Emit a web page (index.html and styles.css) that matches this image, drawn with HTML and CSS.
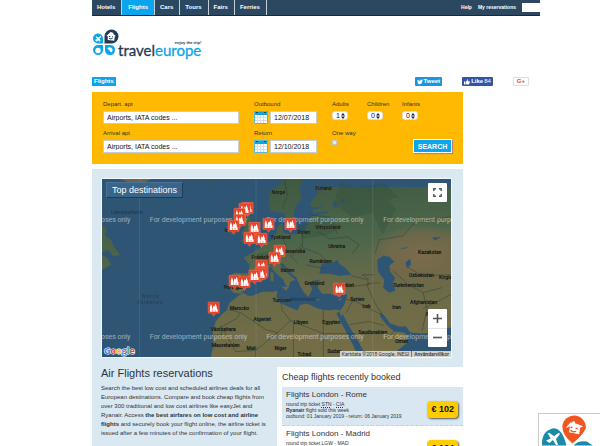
FILE: index.html
```html
<!DOCTYPE html>
<html lang="en">
<head>
<meta charset="utf-8">
<title>Travel Europe - Flights</title>
<link rel="stylesheet" href="styles.css">
</head>
<body>
<nav class="topbar">
  <a href="#">Hotels</a>
  <a href="#" class="active">Flights</a>
  <a href="#">Cars</a>
  <a href="#">Tours</a>
  <a href="#">Fairs</a>
  <a href="#">Ferries</a>
  <div class="tools">
    <a href="#">Help</a>
    <a href="#">My reservations</a>
    <input type="search" aria-label="Search site">
  </div>
</nav>

<header class="brand">
  <svg class="petals" viewBox="0 0 28 28" aria-hidden="true">
    <path d="M1 9.500a5 5 0 0 1 10 0V14.500H6a5 5 0 0 1-5-5z" fill="#0ba5e6"/>
    <path d="M3 11l2-1.200-1.500-2 .8-.4 2.400 1 1.700-1.500.8.200-.2.900-1.500 1.600 1 2.500-.5.700-1.900-1.600L4.800 12.800z" fill="#fff"/>
    <path d="M12.500 14.500V7.500a7 7 0 1 1 7 7z" fill="#1f3a54"/>
    <path d="M14.300 7l4.500-4.200 1.400 1 1-.3.100 1.600 2.500 1.800-1 .6-.6 4.200-6.500-.6.100-3.800z" fill="#fff"/>
    <path d="M17 7.500h1.200M20 7.800h1M17 9.200q1.600 1.300 3.500.2" stroke="#1f3a54" fill="none"/>
    <path d="M11 16v5.500a5 5 0 1 1-5-5.500z" fill="#0ba5e6"/>
    <circle cx="6" cy="21.500" r="2.700" fill="#fff"/>
    <path d="M13 16h5.500a5 5 0 1 1-5.500 5.500z" fill="#0ba5e6"/>
    <path d="M15.300 19.500q3-2.800 5 .5 1 2.300-1.400 3.400-1-2-3.600-3.900z" fill="#fff"/>
  </svg>
  <div class="wordmark">
    <span class="slogan">enjoy the trip!</span>
    <span class="name">travel<b>europe</b></span>
  </div>
</header>

<div class="crumbs">
  <a href="#" class="tag">Flights</a>
  <div class="social">
    <button class="tweet"><svg viewBox="0 0 12 10"><path d="M0 8.500q2.200.1 3.400-1Q1.700 7.200 1.400 5.800h.9Q.7 5 .7 3.300l1 .3Q.3 2.300 1.200.5q2 2.300 4.900 2.400Q6 .2 8.500 0q1 0 1.700.8L11.700.2l-1 1.300L12 1.200l-1.200 1.300Q10.500 9.500 4 9.700 1.700 9.700 0 8.500z" fill="#fff"/></svg>Tweet</button>
    <button class="like"><svg viewBox="0 0 12 12"><path d="M0 5h3v6H0zM4 5l2.500-2.500V.5Q8.500.3 8.200 3L7.800 4.500H11q1.300 1 .3 2.200.4 1-.5 1.700 0 1-.8 1.500-.3 1.100-1.200 1.100H6L4 10z" fill="#fff"/></svg>Like <span>84</span></button>
    <button class="gplus">G+</button>
  </div>
</div>

<main>
  <form class="booking">
    <div class="field from"><label for="dep">Depart. apt</label><input id="dep" type="text" value="Airports, IATA codes ..."></div>
    <div class="field out"><label for="outd">Outbound</label>
      <div class="date"><svg viewBox="0 0 14 13"><path d="M0 0h14v13H0z" fill="#fff"/><path d="M0 0h14v4H0z" fill="#12a2dc"/><path d="M3 0v2M11 0v2" stroke="#1d4660" stroke-width="2"/><path d="M1 6.500h12M1 9.500h12M3.500 4v9M6.500 4v9M9.500 4v9" stroke="#d5dde2"/><path d="M.5.500h13v12H.5z" stroke="#55b8dd" fill="none"/></svg><input id="outd" type="text" value="12/07/2018"></div></div>
    <div class="field"><label for="ad">Adults</label><select id="ad"><option>1</option></select></div>
    <div class="field"><label for="ch">Children</label><select id="ch"><option>0</option></select></div>
    <div class="field"><label for="inf">Infants</label><select id="inf"><option>0</option></select></div>
    <div class="field from"><label for="arr">Arrival apt</label><input id="arr" type="text" value="Airports, IATA codes ..."></div>
    <div class="field"><label for="ret">Return</label>
      <div class="date"><svg viewBox="0 0 14 13"><path d="M0 0h14v13H0z" fill="#fff"/><path d="M0 0h14v4H0z" fill="#12a2dc"/><path d="M3 0v2M11 0v2" stroke="#1d4660" stroke-width="2"/><path d="M1 6.500h12M1 9.500h12M3.500 4v9M6.500 4v9M9.500 4v9" stroke="#d5dde2"/><path d="M.5.500h13v12H.5z" stroke="#55b8dd" fill="none"/></svg><input id="ret" type="text" value="12/10/2018"></div></div>
    <div class="field"><label for="ow">One way</label><input id="ow" type="checkbox"></div>
    <button class="search" type="button">SEARCH</button>
  </form>

  <section class="panel">
    <div class="map">
      <svg class="world" viewBox="101 179 350 179" preserveAspectRatio="xMidYMid slice">
        <defs>
          <linearGradient id="land" gradientUnits="userSpaceOnUse" x1="300" y1="179" x2="318" y2="358">
            <stop offset="0" stop-color="#3f5a42"/><stop offset=".35" stop-color="#4c664b"/><stop offset=".6" stop-color="#696a49"/><stop offset="1" stop-color="#756e46"/>
          </linearGradient>
          <radialGradient id="steppe"><stop offset="0" stop-color="#7c6c4a"/><stop offset=".7" stop-color="#73684a" stop-opacity=".8"/><stop offset="1" stop-color="#73684a" stop-opacity="0"/></radialGradient>
          <g id="pin">
            <path d="M-5.500-6.500h11v11h-3.500L0 7.500-2 4.500h-3.500z" fill="#e8402a" stroke="#f4704f" stroke-width=".6"/>
            <path d="M-3.800 3.200V-1.500l1.100-3.300 1.100 3.300V0h.8v-1.500L.2-3.500l.8 1.500V-2.500L2-5 3.200-1.500v1.800h.8v2.900z" fill="#fff"/>
            <path d="M-1.200 3.200V.8M1.500 3.200V1" stroke="#e8402a" stroke-width=".5"/>
          </g>
        </defs>
        <path d="M101 179h350v179H101z" fill="#2f5575"/>
        <g fill="url(#land)">
          <path d="M210 358l3-13-1-12 3-11 6-7 5-4 3-8 9-7 5-3 4 3 5 0 10-4 10 0 5-1-1 6 3 6 9 4 9 4 3-6 7-1 11 5 10 2 8-1 4 1 4-6 2-6 1-5-9 3-8-3-8 0-4-5-1-6 3-3-8 1-4 2 4 6-4 8-5-5-4-7-3-7-8-7-5-7-4-1 3 6 8 7 5 4-5 2-2 6-3-3-2-5-8-7-5-6-6 2-7 2-1 5-6 4-3 7-7 7-7-1-3-3 1-14 2-3 15 1 1-9-6-7 9-5 6-4 8-6 6-3 4-7 1-6 4-4 2 10 9 2 12-2 4-10 4-7 10-2 6-1-2-2-13 2-3-10 7-10 3-6h134v179z"/>
          <path d="M268 203l2-13 10-6 5-5h18l-4 10 2 10-6 7-2 11-5 6-4-10-7-1-7-1z"/>
          <path d="M239 242l4-3-2-7 4-4-4-6-1-7 5-5 4 5 1 9 6 7 2 7-6 3-7 1z"/>
          <path d="M230 234l1-9 5-3 2 5-2 6z"/>
          <path d="M101 225l5 4-2 7 6 4 3 7 6 8-6 2-6-7-6 3z"/>
          <path d="M101 255l6 4 3 6-9 5zM203 179l8 0-3 2zM281 287l7 0-2 4zM270 272l3 1 0 9-3-1zM313 299l8 1-5 1zM337 300l5-2-2 3z"/>
        </g>
        <path d="M119 179h32l-9 4-7 1-8-2z" fill="#68654a"/>
        <ellipse cx="423" cy="256" rx="56" ry="32" fill="url(#steppe)"/>
        <g fill="#2f5575">
          <path d="M319 274l2-9 4-5 7 3 5-3 2 4 7 5 5 6-12 1-10-2z"/>
          <path d="M377 260l6-4 6 1 5 5-5 4 1 6 5 6-2 5 2 8-6 2-6-5 1-8-6-8z"/>
          <path d="M405 263l5-4 1 6-4 3z"/>
          <path d="M339 312l2 5 1-3 7 13 8 13 6 11 3 7h-8l-5-12-9-17-8-15z"/>
          <path d="M380 313l5 4 5 7 9 3 7 0 4 6 11 1 16-1 8-4 6-1v30h-70l15-6 10-8 2-8-5-3-9-1-7-6-7-9z"/>
          <path d="M294 211l12-3 13-1 7-2-9 4-8 1-3 8-5 3-4 7-6 4-8-1 3-6 7-5z"/>
          <path d="M318 188l3-3 2 4-3 2zM332 202l4 0 2 5-4 1zM340 199l4 0 1 4-3 0zM367 187l4 5-3-1zM361 179l1 6-3-4zM399 249l9-2-3 2zM432 238l9-1-6 4z"/>
        </g>
        <g fill="#334f3c" opacity=".35">
          <path d="M340 182l16 5 28-4 14 14-10 3 8 9-14 26-9-22-22 4-17-14z"/>
          <path d="M297 226l26-7 20 8-15 8-26 4zM256 254l16-3 7 4-11 8-10-1z"/>
        </g>
        <g fill="none" stroke="#303b2d" stroke-width=".6" opacity=".75">
          <path d="M228 310l12 3-4 6-15 8v8l-9 1M240 313l25 17 12 3 13-12-8-10-2-10M277 333l-22 18-20 1-9-16-6-10M290 321l33 13v-25M323 334h33M293 323v35M323 334v24M255 351v7M346 300l7 0 10 6 20 10M353 300l-7 13M383 316l-8-12-9-20 14-1M351 276l16 4 2 5-22 2M349 325l20-3 15 4M386 339l9-8M393 287l14-3 16 9 19-5M407 284l-14-13M423 293l4 16-5 22M423 309l28-14M375 253l4-13 24-4 12-14 22-3 14-2M233 275l5 2-2 13M249 273l12 4M253 253l15 9 4 5M272 248l10 5 12-1 8-8M281 237l5 10M302 234l0 14-12 8 8 8M318 232l11 7 18-2 12 8-7 9M302 248l17 6 7 7M305 265l20 4M309 215l20 2 8 17M284 180l3 15-5 14M369 280l-7-5 12 0M407 267l15 9 29-1"/>
        </g>
        <g class="places">
          <text x="271" y="194">Norge</text><text x="315" y="190">Finland</text><text x="315" y="229">Vitryssland</text><text x="297" y="234">Polen</text>
          <text x="270" y="239">Tyskland</text><text x="328" y="248">Ukraina</text><text x="251" y="259">Frankrike</text><text x="282" y="253">Slovenska</text><text x="309" y="263">Rumänien</text>
          <text x="280" y="272">Italien</text><text x="304" y="285">Grekland</text><text x="338" y="287">Turkiet</text><text x="350" y="301">Syrien</text><text x="362" y="308">Irak</text>
          <text x="392" y="309">Iran</text><text x="418" y="254">Kazakstan</text><text x="409" y="277">Uzbekistan</text><text x="439" y="279">Kirgizistan</text><text x="393" y="287">Turkmenistan</text>
          <text x="410" y="304">Afghanistan</text><text x="223" y="289">Portugal</text><text x="229" y="310">Marocko</text><text x="253" y="321">Algeriet</text><text x="272" y="302">Tunisien</text>
          <text x="293" y="324">Libyen</text><text x="322" y="324">Egypten</text><text x="358" y="334">Saudiarabien</text><text x="395" y="343">Oman</text><text x="210" y="331">Västsahara</text>
          <text x="211" y="347">Mauretanien</text><text x="246" y="350">Mali</text><text x="274" y="351">Niger</text><text x="297" y="357">Tchad</text><text x="327" y="354">Sudan</text><text x="224" y="232">Irland</text><text x="426" y="316">Pakistan</text>
          <text class="water" x="290" y="301">Medelhavet</text><text class="water" x="110" y="214">Labradorhavet</text>
          <text class="water ocean" x="141" y="298">Norra</text><text class="water ocean" x="136" y="304">Atlanten</text>
        </g>
        <path d="M138.500 179v179M255.500 179v179M372.500 179v179" stroke="#fff" opacity=".08"/>
        <g class="watermark">
          <text x="32" y="222">For development purposes only</text><text x="149" y="222">For development purposes only</text><text x="266" y="222">For development purposes only</text><text x="383" y="222">For development purposes only</text>
          <text x="32" y="339">For development purposes only</text><text x="149" y="339">For development purposes only</text><text x="266" y="339">For development purposes only</text><text x="383" y="339">For development purposes only</text>
        </g>
        <use href="#pin" x="247" y="209"/><use href="#pin" x="244" y="210"/><use href="#pin" x="239" y="215"/><use href="#pin" x="239" y="221"/><use href="#pin" x="233" y="227"/>
        <use href="#pin" x="254" y="229"/><use href="#pin" x="268" y="225"/><use href="#pin" x="290" y="225"/><use href="#pin" x="249" y="239"/><use href="#pin" x="261" y="240"/>
        <use href="#pin" x="279" y="252"/><use href="#pin" x="274" y="259"/><use href="#pin" x="261" y="267"/><use href="#pin" x="262" y="273"/><use href="#pin" x="260" y="275"/><use href="#pin" x="254" y="277"/>
        <use href="#pin" x="234" y="282"/><use href="#pin" x="244" y="283"/><use href="#pin" x="213" y="309"/><use href="#pin" x="339" y="290"/>
        <text class="google" x="103" y="355"><tspan fill="#4285f4">G</tspan><tspan fill="#ea4335">o</tspan><tspan fill="#fbbc05">o</tspan><tspan fill="#4285f4">g</tspan><tspan fill="#34a853">l</tspan><tspan fill="#ea4335">e</tspan></text>
      </svg>
      <h2 class="maptitle">Top destinations</h2>
      <button class="full" aria-label="Fullscreen"><svg viewBox="0 0 9 9"><path d="M.8 3V.8H3M6 .8h2.200V3M8.200 6v2.200H6M3 8.200H.8V6" fill="none" stroke="#555" stroke-width="1.400"/></svg></button>
      <div class="zoomer">
        <button aria-label="Zoom in"><svg viewBox="0 0 9 9"><path d="M0 4.500h9M4.500 0v9" stroke="#555" stroke-width="1.600"/></svg></button>
        <button aria-label="Zoom out"><svg viewBox="0 0 9 9"><path d="M0 4.500h9" stroke="#555" stroke-width="1.600"/></svg></button>
      </div>
      <div class="credits"><span>Kartdata ©2018 Google, INEGI</span><a href="#">Användarvillkor</a></div>
    </div>

    <div class="columns">
      <article class="intro">
        <h1>Air Flights reservations</h1>
        <p>Search the best low cost and scheduled airlines deals for all European destinations. Compare and book cheap flights from over 300 traditional and low cost airlines like easyJet and Ryanair. Access <b>the best airfares on low cost and airline flights</b> and securely book your flight online, the airline ticket is issued after a few minutes of the confirmation of your flight.</p>
      </article>
      <section class="deals">
        <h2>Cheap flights recently booked</h2>
        <div class="deal shaded">
          <div>
            <h3>Flights London - Rome</h3>
            <p>round trip ticket <u>STN</u> - <u>CIA</u><br><b>Ryanair</b> flight sold this week<br>outbund: 01 January 2019 - return: 06 January 2019</p>
          </div>
          <a href="#" class="price">€ 102</a>
        </div>
        <div class="deal">
          <div>
            <h3>Flights London - Madrid</h3>
            <p>round trip ticket <u>LGW</u> - <u>MAD</u></p>
          </div>
          <a href="#" class="price">€ 124</a>
        </div>
      </section>
    </div>
  </section>
</main>

<aside class="badge" aria-label="Travel Europe">
  <svg viewBox="0 0 60 31">
    <path d="M23 12a11.500 11.500 0 1 1 23 2Q44 20 33 29 23 21 23 12z" fill="#f0561f"/>
    <path d="M26 14l5-6 1.500.5 1-1.500 2 .5v1.500l8 3-3 1.500-1 6.500-10-2 1-6z" fill="#fff"/>
    <path d="M31 13l2 .5M36 14l2 .5M31 16q2.500 2.500 5.500 1" stroke="#f0561f" stroke-width="1.300" fill="none"/>
    <path d="M3 31Q2 17 14 14q9 0 13 17z" fill="#1b8ba8"/>
    <path d="M7 26l4.500-2-3-5 1.500-.5 5 3.500 4-3.500 1.500.5-.3 1.500-3.500 4 2 6h-2l-3-5-3.500 3z" fill="#fff"/>
    <path d="M34 31q4-5 13-4l6 4z" fill="#1b8ba8"/>
  </svg>
</aside>
</body>
</html>
```
FILE: styles.css
```css
* { box-sizing: border-box; }
body {
  margin: 0;
  height: 100vh;
  overflow: hidden;
  background: #fff;
  color: #333;
  font: 6px/9px "Liberation Sans", Arial, sans-serif;
}
h1, h2, h3, p { margin: 0; font-weight: normal; }
a { color: inherit; text-decoration: none; }
button, input, select { font: inherit; color: inherit; margin: 0; padding: 0; border: 0; border-radius: 0; }
svg { display: block; }

.topbar {
  display: flex;
  height: 16px;
  margin: 0 60px 0 92px;
  background: #2c4861;
  border-bottom: 1px solid #122b42;
  color: #fff;
  font-weight: bold;
  line-height: 15px;
}
.topbar > a { padding: 0 6px 0 5px; border-right: 1px solid #c3ced8; }
.topbar > .active { background: #0ba5ee; padding: 0 6px; }
.tools { display: flex; align-items: center; gap: 6px; margin-left: auto; font-size: 5px; }
.tools input { width: 18px; height: 9px; background: #fff; }

.brand { display: flex; align-items: flex-start; margin: 13px 0 0 92px; height: 30px; }
.petals { width: 28px; height: 28px; }
.wordmark { display: flex; flex-direction: column; align-items: flex-end; padding-top: 12px; margin-left: -2px; color: #1f3a54; }
.slogan { font-size: 4px; line-height: 4px; font-weight: bold; }
.name { font: 15px/11px Lato, sans-serif; -webkit-text-stroke: .3px; }
.name b { color: #0ba5e6; font-weight: normal; }

.crumbs { display: flex; justify-content: space-between; align-items: center; margin: 18px 71px 0 92px; }
.tag { background: #0ba5ee; color: #fff; font-weight: bold; padding: 0 2px; }
.social { display: flex; gap: 20px; }
.social button { display: flex; align-items: center; gap: 1px; height: 9px; padding: 0 2px; border-radius: 1px; color: #fff; font-size: 6px; font-weight: bold; line-height: 9px; }
.social svg { width: 6px; height: 6px; }
.social .tweet { background: #1b95e0; }
.social .like { background: #3355a8; }
.like span { font-weight: normal; }
.social .gplus { background: #fff; border: 1px solid #ddd; padding: 0 3px; color: #dc4a38; line-height: 7px; }

main { margin: 6px 137px 0 92px; }
.booking {
  position: relative;
  display: grid;
  grid-template-columns: 1fr 63px 20px 20px 50px;
  gap: 5px 15px;
  padding: 8px 11px 11px;
  background: #ffb900;
}
.field { display: flex; flex-direction: column; align-items: flex-start; gap: 3px; line-height: 8px; white-space: nowrap; }
.field input[type="text"] { width: 100%; height: 13px; padding: 0 3px; background: #fff; border: 1px solid #c8cdd0; font-size: 7px; color: #111; }
.date { display: flex; gap: 2px; width: 100%; }
.date svg { flex: none; width: 14px; height: 13px; }
.field select {
  appearance: none;
  width: 16px;
  height: 9px;
  padding-left: 3px;
  border: 1px solid #ddd;
  border-radius: 3px;
  color: #111;
  font-size: 7px;
  line-height: 7px;
  background: #fff url("data:image/svg+xml,%3Csvg xmlns='http://www.w3.org/2000/svg' viewBox='0 0 4 6'%3E%3Cpath d='M0 2.500L2 0l2 2.500zM0 3.500h4L2 6z' fill='%23222'/%3E%3C/svg%3E") no-repeat right 2px center / 4px 6px;
}
.field input[type="checkbox"] { appearance: none; width: 5px; height: 5px; background: #e2e8ea; border: 1px solid #c3c7c0; }
.search { grid-column: 4 / 6; justify-self: end; align-self: end; width: 39px; height: 14px; background: #0ba5ee; border: 1px solid #fff; box-shadow: 1px 1px 1px #a88; color: #fff; font-size: 7px; font-weight: bold; }

.panel { margin-top: 5px; padding-top: 9px; background: #dae8f1; }
.map { position: relative; margin: 0 11px 0 9px; border: 1px solid #f2f8fb; }
.world { width: 100%; }
.places { font: 500 5px Roboto, sans-serif; fill: #0d0f0c; stroke: #59634a; stroke-width: .4px; paint-order: stroke; }
.places .water { fill: #1e3c57; stroke: none; }
.places .ocean { fill: #233f58; letter-spacing: 1px; }
.watermark { font: 7px Roboto, sans-serif; fill: #fff; opacity: .5; }
.google { font: bold 9px "Open Sans", sans-serif; stroke: #fff; stroke-width: 1px; paint-order: stroke; }
.maptitle { position: absolute; left: 4px; top: 3px; padding: 0 5px; background: #39658b; border: 1px solid #4a7297; border-right-color: #1c3c58; border-bottom-color: #1c3c58; color: #fff; font-size: 9px; line-height: 14px; }
.full { position: absolute; right: 4px; top: 4px; width: 19px; height: 19px; display: grid; place-items: center; background: #fff; border-radius: 1px; }
.map button svg { width: 9px; height: 9px; }
.zoomer { position: absolute; right: 4px; bottom: 10px; width: 19px; background: #fff; border-radius: 1px; }
.zoomer button { display: grid; place-items: center; width: 100%; height: 19px; background: none; }
.zoomer button + button { box-shadow: inset 0 1px #e4e4e4; }
.credits { position: absolute; right: 0; bottom: 0; display: flex; background: #cfd2cd; color: #333; font: 5px/6px Roboto, sans-serif; white-space: nowrap; }
.credits > * { padding: 0 2px; }
.credits a { border-left: 1px solid #777; font-weight: 500; }

.columns { display: grid; grid-template-columns: 176px 1fr; gap: 9px; padding-top: 9px; }
.intro { padding-left: 9px; }
.intro h1 { font-size: 11px; line-height: 13px; margin-bottom: 4px; color: #2b3540; }
.intro p { width: 168px; }
.deals { padding: 5px 0 0 5px; background: #fff; min-height: 90px; }
.deals h2 { font-size: 9px; line-height: 10px; margin-bottom: 5px; }
.deal { display: flex; justify-content: space-between; align-items: flex-start; padding: 2px 5px 0 4px; height: 39px; }
.deal.shaded { background: #d8e7f2; border-bottom: 1px dashed #c8d0d5; }
.deal h3 { font-size: 8px; line-height: 12px; }
.deal p { font-size: 5px; line-height: 6px; }
.deal u { text-decoration: underline dotted; }
.price { margin-top: 12px; padding: 0 4px; border-radius: 4px; background: #fc0; box-shadow: 1px 1px 2px #555; color: #111; font-size: 9px; font-weight: bold; line-height: 17px; white-space: nowrap; }

.badge { position: fixed; right: 0; bottom: 0; width: 62px; border: 1px solid #ccc; border-width: 1px 0 0 1px; background: #fff; }
```
